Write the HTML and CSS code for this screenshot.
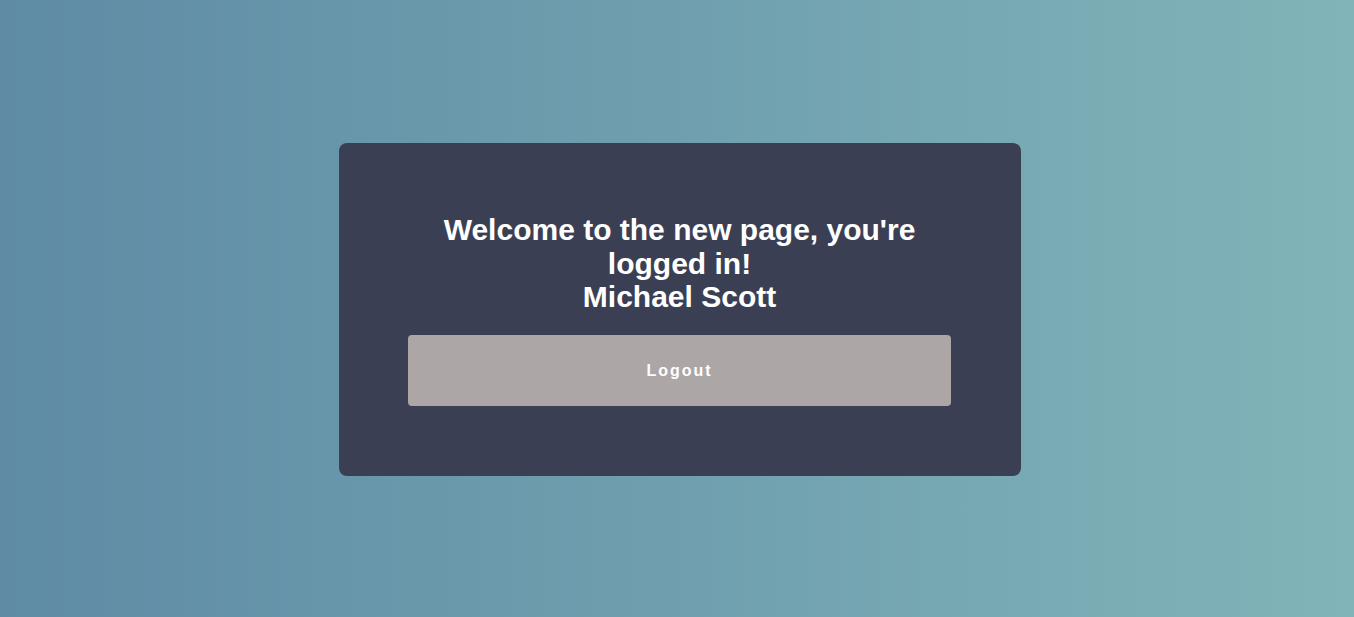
FILE: index.html
```html
<!DOCTYPE html>
<html lang="en">
<head>
<meta charset="utf-8">
<title>Welcome</title>
<link rel="stylesheet" href="styles.css">
</head>
<body>
<main class="page">
  <section class="card">
    <h1 class="title">Welcome to the new page, you're logged in!<br>Michael Scott</h1>
    <button class="logout" type="button">Logout</button>
  </section>
</main>
</body>
</html>
```
FILE: styles.css
```css
html, body {
  margin: 0;
  padding: 0;
  height: 100%;
}
body {
  font-family: "Liberation Sans", Arial, sans-serif;
  background: linear-gradient(to right, #5f8ba5, #80b4b8);
}
.page {
  height: 617px;
  display: flex;
  justify-content: center;
  align-items: flex-start;
  padding: 143px 0 0 6px;
  box-sizing: border-box;
}
.card {
  width: 682px;
  box-sizing: border-box;
  padding: 70px 70px 70px 69px;
  background: #3b3f54;
  border-radius: 8px;
  display: flex;
  flex-direction: column;
}
.title {
  margin: 0 0 21px;
  font-size: 30px;
  line-height: 33.5px;
  font-weight: 700;
  color: #ffffff;
  text-align: center;
}
.logout {
  height: 71px;
  width: 100%;
  padding: 2px 0 0;
  border: none;
  border-radius: 4px;
  background: #ada6a6;
  color: #ffffff;
  font-family: "Liberation Sans", Arial, sans-serif;
  font-size: 16px;
  font-weight: 700;
  letter-spacing: 2px;
  cursor: pointer;
}
```
